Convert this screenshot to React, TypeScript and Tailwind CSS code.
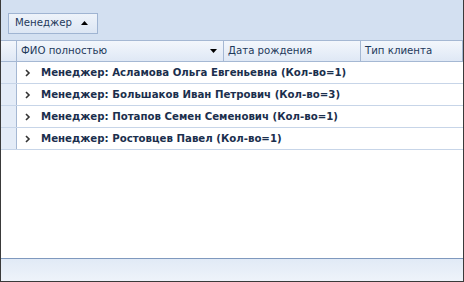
import React from "react";

const rows = [
  "Менеджер: Асламова Ольга Евгеньевна (Кол-во=1)",
  "Менеджер: Большаков Иван Петрович (Кол-во=3)",
  "Менеджер: Потапов Семен Семенович (Кол-во=1)",
  "Менеджер: Ростовцев Павел (Кол-во=1)",
];

function Chevron() {
  return (
    <svg width="6" height="8" viewBox="0 0 6 8" className="shrink-0">
      <path d="M1 1 L4 4 L1 7" stroke="#333" strokeWidth="1.6" fill="none" />
    </svg>
  );
}

export default function App() {
  return (
    <div
      className="w-[464px] h-[282px] flex flex-col bg-white border-x border-b border-[#3a3a3a] text-[10.2px] text-[#1e395b]"
      style={{ fontFamily: '"DejaVu Sans", Tahoma, sans-serif' }}
    >
      {/* group panel */}
      <div className="h-[40px] shrink-0 bg-[#d3e0f1] flex items-center pl-[7px] pt-[6px]">
        <div className="h-[21px] w-[90px] border border-[#9fb4d2] bg-gradient-to-b from-[#eef3fa] to-[#dce6f4] flex items-center justify-between pl-[6px] pr-[9px] text-[#1e395b]">
          <span>Менеджер</span>
          <svg width="7" height="4" viewBox="0 0 7 4">
            <path d="M0 4 L3.5 0 L7 4 Z" fill="#000" />
          </svg>
        </div>
      </div>
      {/* header */}
      <div className="h-[22px] shrink-0 flex border-y border-[#a5b8d3] bg-gradient-to-b from-[#f3f7fc] to-[#dfe8f5]">
        <div className="w-[16px] shrink-0 border-r border-[#a5b8d3]" />
        <div className="w-[207px] shrink-0 border-r border-[#a5b8d3] flex items-center pl-[4px] pr-[6px] justify-between">
          <span>ФИО полностью</span>
          <svg width="7" height="4" viewBox="0 0 7 4">
            <path d="M0 0 L7 0 L3.5 4 Z" fill="#000" />
          </svg>
        </div>
        <div className="w-[137px] shrink-0 border-r border-[#a5b8d3] flex items-center pl-[4px]">
          Дата рождения
        </div>
        <div className="flex-1 flex items-center pl-[4px] border-r border-[#a5b8d3]">Тип клиента</div>
      </div>
      {/* rows */}
      <div className="flex-1 flex flex-col">
        {rows.map((r) => (
          <div key={r} className="h-[22px] flex border-b border-[#c7d5e8]">
            <div className="w-[16px] shrink-0 bg-[#e4ecf7] border-r border-[#a5b8d3]" />
            <div className="flex items-center pl-[8px] gap-[10px] font-bold text-[#1b2f4d] whitespace-nowrap">
              <Chevron />
              <span>{r}</span>
            </div>
          </div>
        ))}
        <div className="flex-1" />
      </div>
      {/* footer */}
      <div className="h-[23px] shrink-0 border-t border-[#7f99be] bg-gradient-to-b from-[#e1eaf6] to-[#eef3fa]" />
    </div>
  );
}
